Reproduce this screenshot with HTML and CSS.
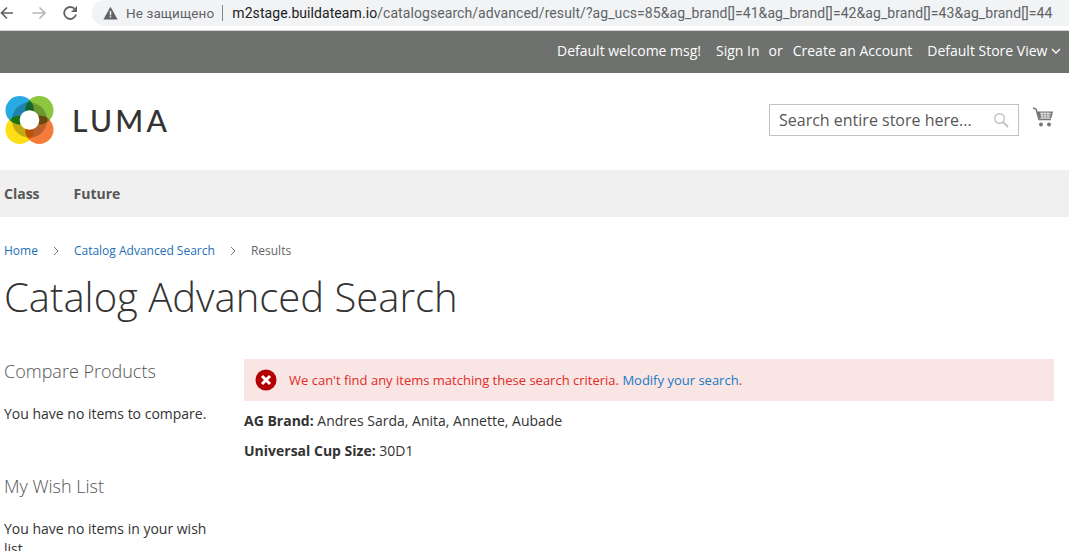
FILE: index.html
```html
<!DOCTYPE html>
<html lang="en">
<head>
<meta charset="utf-8">
<title>Catalog Advanced Search</title>
<link rel="stylesheet" href="styles.css">
</head>
<body>
<div class="chrome">
  <div class="chrome-nav">
    <svg class="chrome-icon" width="16" height="16" viewBox="0 0 16 16"><path d="M14 8H2.500M8 2.500L2.500 8 8 13.500" fill="none" stroke="#5f6368" stroke-width="1.700"/></svg>
    <svg class="chrome-icon" width="16" height="16" viewBox="0 0 16 16"><path d="M1.500 8H14M8.500 2.500L14 8l-5.500 5.500" fill="none" stroke="#b4b6b8" stroke-width="1.700"/></svg>
    <svg class="chrome-icon" width="16" height="16" viewBox="0 0 16 16"><path d="M14 9.500A6 6 0 1 1 12.400 3.700" fill="none" stroke="#5f6368" stroke-width="1.800"/><path d="M15 1v6H9z" fill="#5f6368"/></svg>
  </div>
  <div class="omnibox">
    <svg class="warn" width="15" height="14" viewBox="0 0 15 14"><path d="M7.500 0.800L14.600 13.400H.4z" fill="#5f6368"/><rect x="6.800" y="5" width="1.400" height="4.400" fill="#f1f3f4"/><rect x="6.800" y="10.200" width="1.400" height="1.400" fill="#f1f3f4"/></svg>
    <span class="insecure">Не защищено</span>
    <span class="omni-sep"></span>
    <span class="url">m2stage.buildateam.io<span class="url-path">/catalogsearch/advanced/result/?ag_ucs=85&amp;ag_brand[]=41&amp;ag_brand[]=42&amp;ag_brand[]=43&amp;ag_brand[]=44</span></span>
  </div>
</div>
<div class="panel">
  <span>Default welcome msg!</span>
  <a class="panel-link signin">Sign In</a>
  <span class="or">or</span>
  <a class="panel-link create">Create an Account</a>
  <span class="store">Default Store View
    <svg width="10" height="6" viewBox="0 0 10 6"><path d="M1 1l4 4 4-4" fill="none" stroke="#fff" stroke-width="1.300"/></svg>
  </span>
</div>
<header class="header">
  <div class="logo">
    <svg class="logo-mark" width="49" height="50" viewBox="0 0 50 50">
      <circle class="blend" cx="15" cy="15" r="14.500" fill="#29abe2"/>
      <circle class="blend" cx="35" cy="15" r="14.500" fill="#8dc63f"/>
      <circle class="blend" cx="15" cy="35" r="14.500" fill="#ffdd17"/>
      <circle class="blend" cx="35" cy="35" r="14.500" fill="#f47b3a"/>
      <circle class="blend" cx="25" cy="25" r="18" fill="#c4c4c4"/>
      <circle cx="25" cy="25" r="10" fill="#fff"/>
    </svg>
    <span class="logo-text">LUMA</span>
  </div>
  <div class="header-right">
    <div class="search">
      <span class="search-text">Search entire store here...</span>
      <svg width="16" height="16" viewBox="0 0 16 16"><circle cx="6.500" cy="6.500" r="4.800" fill="none" stroke="#c2c2c2" stroke-width="1.400"/><path d="M10 10l5 5" stroke="#c2c2c2" stroke-width="1.800"/></svg>
    </div>
    <svg class="cart" width="22" height="22" viewBox="0 0 22 22">
      <path d="M1 2l3 1 3 10.500h12" fill="none" stroke="#757575" stroke-width="1.500"/>
      <path d="M5 5.500h16l-1.600 6.800H7z" fill="#757575"/>
      <path d="M8 7.400h11M8.400 9.200h10.200M8.800 11h9.400M10 6v6M13 6v6M16 6v6" stroke="#fff" stroke-width=".7"/>
      <circle cx="9" cy="18.500" r="2" fill="#757575"/><circle cx="17" cy="18.500" r="2" fill="#757575"/>
    </svg>
  </div>
</header>
<nav class="nav"><a>Class</a><a>Future</a></nav>
<div class="breadcrumbs">
  <a>Home</a>
  <svg width="6" height="10" viewBox="0 0 6 10"><path d="M1 1l4 4-4 4" fill="none" stroke="#757575" stroke-width="1"/></svg>
  <a>Catalog Advanced Search</a>
  <svg width="6" height="10" viewBox="0 0 6 10"><path d="M1 1l4 4-4 4" fill="none" stroke="#757575" stroke-width="1"/></svg>
  <span>Results</span>
</div>
<h1 class="title">Catalog Advanced Search</h1>
<div class="columns">
  <aside class="sidebar">
    <h2 class="side-title compare">Compare Products</h2>
    <p class="side-text">You have no items to compare.</p>
    <h2 class="side-title wish">My Wish List</h2>
    <p class="side-text">You have no items in your wish list.</p>
  </aside>
  <main class="main">
    <div class="message">
      <svg width="22" height="22" viewBox="0 0 22 22"><circle cx="11" cy="11" r="10.500" fill="#b30000"/><path d="M7 7l8 8M15 7l-8 8" stroke="#fff" stroke-width="3"/></svg>
      <span>We can't find any items matching these search criteria. <a>Modify your search</a>.</span>
    </div>
    <p class="criteria"><b>AG Brand:</b> Andres Sarda, Anita, Annette, Aubade</p>
    <p class="criteria"><b>Universal Cup Size:</b> 30D1</p>
  </main>
</div>
</body>
</html>
```
FILE: styles.css
```css
html, body { margin: 0; padding: 0; height: 551px; overflow: hidden; background: #fff; }
body { font-family: "Open Sans", sans-serif; color: #333; font-size: 14px; line-height: 20px; }
a { color: #1979c3; }

.chrome { height: 30px; display: flex; align-items: center; border-bottom: 1px solid #d0d2d3; background: #fff; }
.chrome-nav { display: flex; gap: 15.5px; margin-left: -1px; width: 93px; flex: none; align-items: center; margin-top: -4px; }
.omnibox { flex: 1; height: 26px; margin-top: -4px; background: #f1f3f4; border-radius: 13px 0 0 13px; display: flex; align-items: center; padding-left: 11px; white-space: nowrap; overflow: hidden; font-family: "Roboto", "Liberation Sans", sans-serif; font-size: 14px; }
.warn { flex: none; margin-right: 8px; }
.insecure { color: #5f6368; font-size: 13.5px; letter-spacing: .1px; }
.omni-sep { width: 1px; height: 16px; background: #80868b; margin: 0 9px 0 8px; }
.url { color: #202124; letter-spacing: .07px; }
.url-path { color: #5f6368; }

.panel { height: 42px; background: #6e716e; color: #fff; display: flex; align-items: center; padding-left: 557px; padding-bottom: 2px; box-sizing: border-box; white-space: nowrap; }
.panel-link { color: #fff; }
.signin { margin-left: 15px; }
.or { margin-left: 9px; }
.create { margin-left: 10px; }
.store { margin-left: 15px; display: flex; align-items: center; gap: 4px; }

.header { height: 97px; display: flex; justify-content: space-between; align-items: center; padding: 0 15px 0 5px; }
.logo { display: flex; align-items: center; gap: 18px; margin-top: -3px; }
.logo-mark { isolation: isolate; }
.blend { mix-blend-mode: multiply; }
.logo-text { font-family: "Lato", sans-serif; font-size: 30px; line-height: 40px; letter-spacing: 3.2px; color: #333; font-weight: 500; }
.header-right { display: flex; align-items: center; gap: 13px; margin-top: -3px; }
.search { width: 250px; height: 32px; box-sizing: border-box; border: 1px solid #c2c2c2; display: flex; align-items: center; justify-content: space-between; padding: 0 9px; color: #575757; font-size: 16px; }
.cart { margin-top: -6px; }

.nav { height: 47px; background: #f0f0f0; display: flex; align-items: center; gap: 34px; padding: 0 0 0 4px; font-weight: 700; color: #575757; }
.nav a { color: #575757; }

.breadcrumbs { display: flex; align-items: center; height: 20px; margin-top: 24px; padding-left: 4px; font-size: 12px; gap: 15px; color: #666; }
.breadcrumbs a { color: #1e6fb5; }

.title { margin: 11px 0 0 4px; font-size: 40px; line-height: 50px; font-weight: 300; color: #333; }

.columns { display: flex; margin-top: 37px; }
.sidebar { width: 244px; padding-left: 4px; box-sizing: border-box; flex: none; padding-right: 30px; }
.side-title { margin: 0; font-size: 18px; line-height: 24px; font-weight: 300; color: #555; }
.wish { margin-top: 50px; }
.side-text { margin: 21px 0 0; }
.main { width: 810px; }
.message { height: 42px; background: #fae5e5; color: #e02b27; display: flex; align-items: center; gap: 12px; padding-left: 11px; font-size: 13px; box-sizing: border-box; }
.criteria { margin: 10px 0 0; }
.criteria b { font-weight: 700; }
```
